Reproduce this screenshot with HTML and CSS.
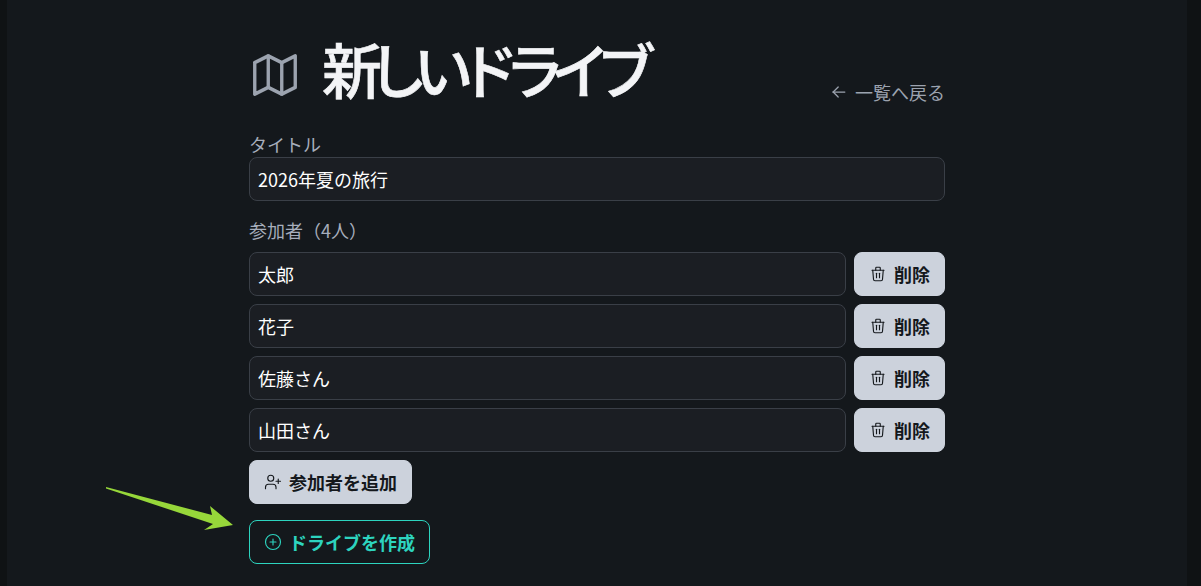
FILE: index.html
```html
<!DOCTYPE html>
<html lang="ja">
<head>
    <meta charset="UTF-8">
    <title>新しいドライブ</title>
    <link rel="stylesheet" href="styles.css">
</head>
<body>
    <div class="page">
        <main class="content">
            <div class="page-head">
                <h1 class="page-title">
                    <svg class="title-icon" viewBox="0 0 24 24"><path d="M3 6.5l6 -3l6 3l6 -3v14l-6 3l-6 -3l-6 3v-14"/><path d="M9 3.5v14"/><path d="M15 6.5v14"/></svg>
                    新しいドライブ
                </h1>
                <a href="#" class="back-link">
                    <svg class="icon back-icon" viewBox="0 0 24 24"><path d="M5 12l14 0"/><path d="M5 12l6 6"/><path d="M5 12l6 -6"/></svg>
                    一覧へ戻る
                </a>
            </div>

            <form>
                <label class="field-label" for="title">タイトル</label>
                <input class="text-input" id="title" type="text" value="2026年夏の旅行">

                <div class="field-label members-label">参加者（4人）</div>
                <div class="member-list">
                    <div class="member-row">
                        <input class="text-input" type="text" value="太郎">
                        <button type="button" class="btn">
                            <svg class="icon" viewBox="0 0 24 24"><path d="M4 7l16 0"/><path d="M10 11l0 6"/><path d="M14 11l0 6"/><path d="M5 7l1 12a2 2 0 0 0 2 2h8a2 2 0 0 0 2 -2l1 -12"/><path d="M9 7v-3a1 1 0 0 1 1 -1h4a1 1 0 0 1 1 1v3"/></svg>
                            削除
                        </button>
                    </div>
                    <div class="member-row">
                        <input class="text-input" type="text" value="花子">
                        <button type="button" class="btn">
                            <svg class="icon" viewBox="0 0 24 24"><path d="M4 7l16 0"/><path d="M10 11l0 6"/><path d="M14 11l0 6"/><path d="M5 7l1 12a2 2 0 0 0 2 2h8a2 2 0 0 0 2 -2l1 -12"/><path d="M9 7v-3a1 1 0 0 1 1 -1h4a1 1 0 0 1 1 1v3"/></svg>
                            削除
                        </button>
                    </div>
                    <div class="member-row">
                        <input class="text-input" type="text" value="佐藤さん">
                        <button type="button" class="btn">
                            <svg class="icon" viewBox="0 0 24 24"><path d="M4 7l16 0"/><path d="M10 11l0 6"/><path d="M14 11l0 6"/><path d="M5 7l1 12a2 2 0 0 0 2 2h8a2 2 0 0 0 2 -2l1 -12"/><path d="M9 7v-3a1 1 0 0 1 1 -1h4a1 1 0 0 1 1 1v3"/></svg>
                            削除
                        </button>
                    </div>
                    <div class="member-row">
                        <input class="text-input" type="text" value="山田さん">
                        <button type="button" class="btn">
                            <svg class="icon" viewBox="0 0 24 24"><path d="M4 7l16 0"/><path d="M10 11l0 6"/><path d="M14 11l0 6"/><path d="M5 7l1 12a2 2 0 0 0 2 2h8a2 2 0 0 0 2 -2l1 -12"/><path d="M9 7v-3a1 1 0 0 1 1 -1h4a1 1 0 0 1 1 1v3"/></svg>
                            削除
                        </button>
                    </div>
                </div>

                <div class="actions">
                    <button type="button" class="btn">
                        <svg class="icon" viewBox="0 0 24 24"><path d="M16 21v-2a4 4 0 0 0 -4 -4H6a4 4 0 0 0 -4 4v2"/><circle cx="9" cy="7" r="4"/><path d="M19 8v6"/><path d="M22 11h-6"/></svg>
                        参加者を追加
                    </button>
                    <button type="submit" class="btn btn-outline">
                        <svg class="icon" viewBox="0 0 24 24"><circle cx="12" cy="12" r="10"/><path d="M8 12h8"/><path d="M12 8v8"/></svg>
                        ドライブを作成
                    </button>
                </div>
            </form>
        </main>
    </div>

    <!-- Annotation arrow on top of the screenshot -->
    <svg class="arrow" viewBox="0 0 140 50"><polygon points="1,1 107,29 105,20 128,39 99,44 108,38 1,2.5"/></svg>
</body>
</html>
```

FILE: styles.css
```css
* {
    margin: 0;
    padding: 0;
    box-sizing: border-box;
}

html, body {
    height: 100%;
}

body {
    position: relative;
    overflow: hidden;
    background-color: #0f1214;
    color: #f3f4f6;
    font-family: "Noto Sans CJK JP", "Noto Sans", sans-serif;
    font-size: 18px;
}

.page {
    height: 100%;
    margin: 0 14px 0 7px;
    padding-left: 242px;
    background-color: #14181c;
}

.content {
    width: 696px;
}

/* Title row */
.page-head {
    display: flex;
    justify-content: space-between;
    align-items: flex-start;
    height: 133px;
    padding-top: 28px;
}

.page-title {
    display: flex;
    align-items: center;
    gap: 20px;
    font-size: 60px;
    font-weight: 500;
    letter-spacing: -14.3px;
    line-height: 80px;
    color: #f3f4f6;
    -webkit-text-stroke: 0.6px #f3f4f6;
}

.title-icon {
    width: 54px;
    height: 54px;
    fill: none;
    stroke: #9ca3af;
    stroke-width: 1.5;
    stroke-linecap: round;
    stroke-linejoin: round;
    margin-left: -1px;
    margin-top: 14px;
}

.back-link {
    display: flex;
    align-items: center;
    gap: 6px;
    align-self: flex-end;
    margin-bottom: 28px;
    color: #9ca3af;
    text-decoration: none;
    line-height: 26px;
}

.icon {
    width: 18px;
    height: 18px;
    flex-shrink: 0;
    fill: none;
    stroke: currentColor;
    stroke-width: 1.5;
    stroke-linecap: round;
    stroke-linejoin: round;
}

.back-icon {
    width: 20px;
    height: 20px;
}

/* Form */
.field-label {
    display: block;
    color: #a6adbb;
    line-height: 23px;
}

label.field-label {
    margin-bottom: 1px;
}

.members-label {
    margin-top: 18px;
    margin-bottom: 10px;
}

.text-input {
    display: block;
    width: 100%;
    height: 44px;
    padding: 0 8px;
    background-color: #1b1e23;
    border: 1px solid #3a3f47;
    border-radius: 8px;
    color: #fff;
    font-family: inherit;
    font-size: 18px;
    font-weight: 400;
}

.member-list {
    display: flex;
    flex-direction: column;
    gap: 8px;
}

.member-row {
    display: flex;
    gap: 8px;
}

.member-row .text-input {
    flex: 1;
    min-width: 0;
}

.btn {
    display: inline-flex;
    align-items: center;
    justify-content: center;
    gap: 7px;
    flex-shrink: 0;
    height: 44px;
    padding: 0 14px;
    background-color: #ccd2dc;
    border: 1px solid #ccd2dc;
    border-radius: 8px;
    color: #14181c;
    font-family: inherit;
    font-size: 18px;
    font-weight: 700;
}

.btn-outline {
    background-color: transparent;
    border-color: #2dd4bf;
    color: #2dd4bf;
}

.actions {
    display: flex;
    flex-direction: column;
    align-items: flex-start;
    gap: 16px;
    margin-top: 8px;
}

.arrow {
    position: absolute;
    left: 105px;
    top: 486px;
    width: 140px;
    height: 50px;
    fill: #97d73a;
}
```
